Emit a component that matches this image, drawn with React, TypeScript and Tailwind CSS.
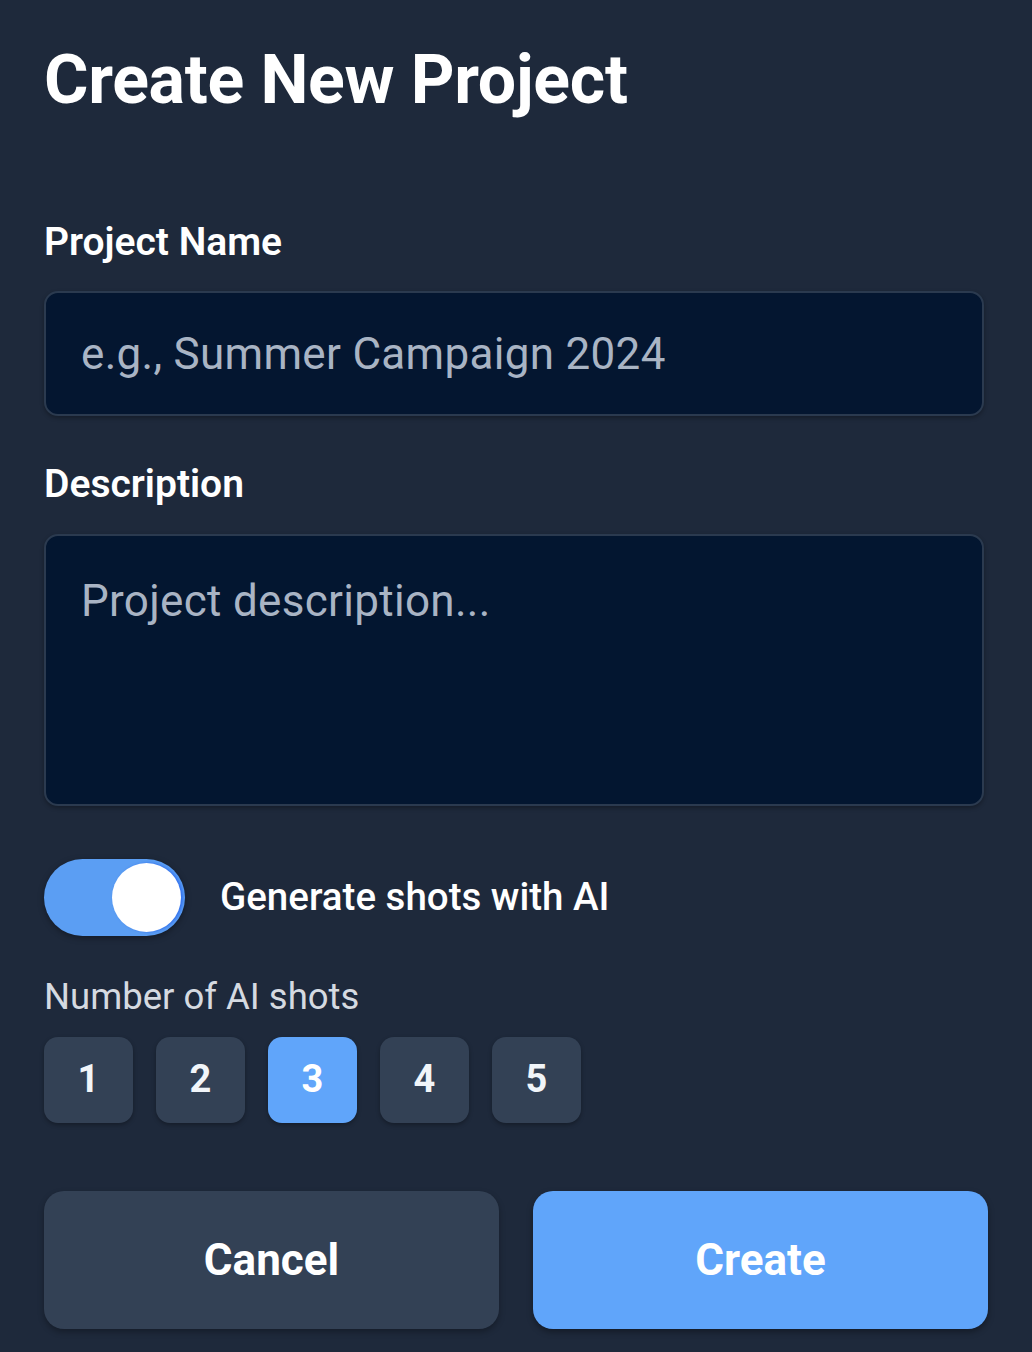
import React, { useState } from 'react';

const App: React.FC = () => {
  const [aiEnabled, setAiEnabled] = useState(true);
  const [shots, setShots] = useState(3);

  return (
    <div
      className="min-h-screen bg-[#1e293b] px-[44px] pt-[46px] pb-[40px] text-white"
      style={{ fontFamily: 'Roboto, "Liberation Sans", sans-serif' }}
    >
      <h1 className="text-[68px] font-bold leading-none tracking-[-0.3px]">Create New Project</h1>

      <label className="mt-[109px] block text-[39px] font-semibold leading-none">Project Name</label>
      <input
        type="text"
        placeholder="e.g., Summer Campaign 2024"
        className="mt-[29px] block h-[125px] w-[940px] rounded-[14px] border-2 border-[#2b3a4f] bg-[#041630] px-[35px] text-[44px] tracking-[0.3px] text-white shadow-[0_2px_4px_rgba(0,0,0,0.3)] outline-none placeholder:text-[#a9b4c4]"
      />

      <label className="mt-[49px] block text-[39px] font-semibold leading-none">Description</label>
      <textarea
        placeholder="Project description..."
        className="mt-[30px] block h-[272px] w-[940px] resize-none rounded-[14px] border-2 border-[#2b3a4f] bg-[#031630] px-[35px] pt-[32px] text-[44px] leading-[1.5] tracking-[0.3px] text-white shadow-[0_2px_4px_rgba(0,0,0,0.3)] outline-none placeholder:text-[#a9b4c4]"
      />

      <div className="mt-[53px] flex items-center gap-[35px]">
        <button
          type="button"
          onClick={() => setAiEnabled(!aiEnabled)}
          className={`flex h-[77px] w-[141px] items-center rounded-full px-[4px] shadow-[0_2px_6px_rgba(0,0,0,0.35)] ${
            aiEnabled ? 'justify-end bg-[#5b9ef3]' : 'justify-start bg-[#475569]'
          }`}
        >
          <span className="block h-[69px] w-[69px] rounded-full bg-white shadow-[2px_0_3px_rgba(37,99,235,0.8)]" />
        </button>
        <span className="text-[38.5px] font-medium leading-none">Generate shots with AI</span>
      </div>

      <p className="mt-[43px] text-[36.5px] leading-none text-[#d5dae1]">Number of AI shots</p>
      <div className="mt-[21px] flex gap-[23px]">
        {[1, 2, 3, 4, 5].map((n) => (
          <button
            key={n}
            type="button"
            onClick={() => setShots(n)}
            className={`flex h-[86px] w-[89px] items-center justify-center rounded-[14px] text-[38px] font-bold shadow-[0_2px_4px_rgba(0,0,0,0.3)] ${
              shots === n ? 'bg-[#60a5fa] text-white' : 'bg-[#334155] text-[#f1f5f9]'
            }`}
          >
            {n}
          </button>
        ))}
      </div>

      <div className="mt-[68px] flex gap-[34px]">
        <button
          type="button"
          className="h-[138px] flex-1 rounded-[20px] bg-[#334155] text-[44px] font-bold shadow-[0_3px_6px_rgba(0,0,0,0.3)]"
        >
          Cancel
        </button>
        <button
          type="button"
          className="h-[138px] flex-1 rounded-[20px] bg-[#60a5fa] text-[44px] font-bold shadow-[0_3px_6px_rgba(0,0,0,0.35)]"
        >
          Create
        </button>
      </div>
    </div>
  );
};

export default App;
